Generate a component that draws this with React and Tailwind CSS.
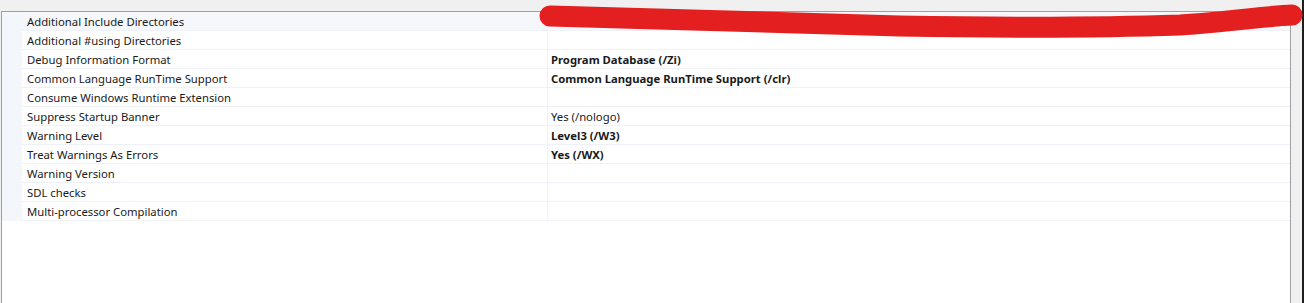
import React from "react";

const rows = [
  ["Additional Include Directories", "", false],
  ["Additional #using Directories", "", false],
  ["Debug Information Format", "Program Database (/Zi)", true],
  ["Common Language RunTime Support", "Common Language RunTime Support (/clr)", true],
  ["Consume Windows Runtime Extension", "", false],
  ["Suppress Startup Banner", "Yes (/nologo)", false],
  ["Warning Level", "Level3 (/W3)", true],
  ["Treat Warnings As Errors", "Yes (/WX)", true],
  ["Warning Version", "", false],
  ["SDL checks", "", false],
  ["Multi-processor Compilation", "", false],
];

export default function App() {
  return (
    <div
      className="relative flex h-[303px] w-[1304px] overflow-hidden bg-[#f0f0f0] text-[11.3px] text-[#1a1a1a]"
      style={{ fontFamily: '"Noto Sans", "Open Sans", sans-serif' }}
    >
      <div className="ml-[1px] mt-[11px] flex h-[300px] w-[1290px] flex-col border-l border-r border-t border-[#a0a0a0] bg-white">
        {rows.map(([name, value, bold], i) => (
          <div
            key={i}
            className={`flex h-[19px] ${i === 0 ? "bg-[#f5f7fb]" : ""}`}
          >
            <div className="w-[20px] shrink-0 bg-[#f3f6fb]" />
            <div className="flex w-[526px] shrink-0 items-center border-b border-r border-[#eff1f8] pl-[5px] pt-[1px] leading-[17px]">
              {name}
            </div>
            <div
              className={`flex flex-1 items-center border-b border-[#eff1f8] pl-[3px] pt-[1px] leading-[17px] ${bold ? "font-bold" : ""}`}
            >
              {value}
            </div>
          </div>
        ))}
      </div>
      <div className="ml-[11px] w-[2px] bg-[#1e1e1e]" />
      <svg
        className="absolute left-0 top-0"
        width="1304"
        height="60"
        viewBox="0 0 1304 60"
      >
        <path
          d="M 550 16 C 650 19, 760 23, 900 26 C 1020 28, 1120 27, 1180 25 C 1230 22, 1265 16, 1292 15"
          fill="none"
          stroke="#e41f1f"
          strokeWidth="21"
          strokeLinecap="round"
        />
      </svg>
    </div>
  );
}
